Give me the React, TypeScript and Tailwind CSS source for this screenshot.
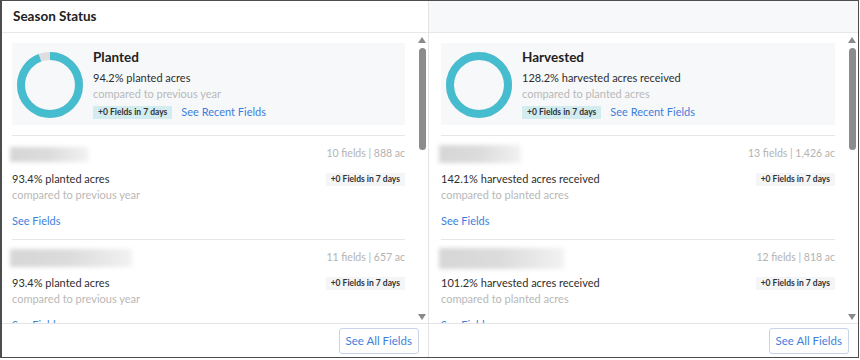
import React from "react";

type Row = {
  nameWidth: string;
  nameHeight: string;
  count: string;
  pct: string;
  compared: string;
};

type Panel = {
  title: string;
  headline: string;
  compared: string;
  percent: number;
  rows: Row[];
  headerText?: string;
};

const panels: Panel[] = [
  {
    headerText: "Season Status",
    title: "Planted",
    headline: "94.2% planted acres",
    compared: "compared to previous year",
    percent: 94.2,
    rows: [
      { nameWidth: "w-[78px]", nameHeight: "h-[15px]", count: "10 fields | 888 ac", pct: "93.4% planted acres", compared: "compared to previous year" },
      { nameWidth: "w-[122px]", nameHeight: "h-[18px]", count: "11 fields | 657 ac", pct: "93.4% planted acres", compared: "compared to previous year" },
    ],
  },
  {
    title: "Harvested",
    headline: "128.2% harvested acres received",
    compared: "compared to planted acres",
    percent: 128.2,
    rows: [
      { nameWidth: "w-[82px]", nameHeight: "h-[18px]", count: "13 fields | 1,426 ac", pct: "142.1% harvested acres received", compared: "compared to planted acres" },
      { nameWidth: "w-[125px]", nameHeight: "h-[21px]", count: "12 fields | 818 ac", pct: "101.2% harvested acres received", compared: "compared to planted acres" },
    ],
  },
];

function Donut({ percent }: { percent: number }) {
  const r = 29;
  const c = 2 * Math.PI * r;
  const filled = Math.min(percent, 100) / 100;
  return (
    <svg width="66" height="66" viewBox="0 0 66 66" className="shrink-0">
      <circle cx="33" cy="33" r={r} fill="none" stroke="#dedede" strokeWidth="8" />
      <circle
        cx="33"
        cy="33"
        r={r}
        fill="none"
        stroke="#46bccf"
        strokeWidth="8"
        strokeDasharray={`${filled * c} ${c}`}
        transform="rotate(-90 33 33)"
      />
    </svg>
  );
}

function Scrollbar() {
  return (
    <div className="w-[12px] flex flex-col items-center pt-[4px] pb-[3px]">
      <div className="w-0 h-0 border-l-[4px] border-r-[4px] border-b-[6px] border-l-transparent border-r-transparent border-b-[#8a8a8a]" />
      <div className="mt-[5px] w-[7px] h-[102px] rounded-full bg-[#8c8c8c]" />
      <div className="flex-1" />
      <div className="w-0 h-0 border-l-[4px] border-r-[4px] border-t-[6px] border-l-transparent border-r-transparent border-t-[#8a8a8a]" />
    </div>
  );
}

function FieldRow({ row }: { row: Row }) {
  return (
    <div className="border-t border-[#e6e6e6] pt-[10px] pb-[10px]">
      <div className="flex items-center justify-between h-[16px]">
        <div className={`-ml-[2px] ${row.nameWidth} ${row.nameHeight} blur-[2px] bg-linear-to-r from-[#d6d6d6] via-[#dcdcdc] to-[#f2f2f2]`} />
        <span className="text-[10.5px] text-[#b3b3b3]">{row.count}</span>
      </div>
      <div className="mt-[9px] flex items-center justify-between h-[16px]">
        <span className="text-[11px] text-[#2e2e2e]">{row.pct}</span>
        <span className="bg-[#f4f5f6] px-[5px] h-[13px] flex items-center text-[8.5px] font-bold text-[#333]">+0 Fields in 7 days</span>
      </div>
      <div className="h-[16px] flex items-center text-[11px] text-[#b8b8b8]">{row.compared}</div>
      <div className="mt-[10px] h-[16px] flex items-center text-[11px] text-[#3d7fdc]">See Fields</div>
    </div>
  );
}

function StatusPanel({ panel, first }: { panel: Panel; first: boolean }) {
  return (
    <div className={`flex flex-col h-full ${first ? "w-[427px] border-r border-[#e4e4e4]" : "flex-1"}`}>
      <div className={`h-[32px] shrink-0 border-b border-[#e8e8e8] flex items-center pl-[11px] ${first ? "bg-white" : "bg-[#f7f8fa]"}`}>
        {panel.headerText && <span className="text-[13.5px] font-bold text-[#222]">{panel.headerText}</span>}
      </div>
      <div className="flex h-[290px] shrink-0">
        <div className={`flex-1 overflow-hidden pt-[10px] pr-[11px] ${first ? "pl-[10px]" : "pl-[12px]"}`}>
          <div className="h-[82px] bg-[#f7f8fa] flex items-center pl-[5px] pt-[1px]">
            <Donut percent={panel.percent} />
            <div className="ml-[10px] flex flex-col">
              <div className="h-[16px] flex items-center text-[13.5px] font-bold text-[#222]">{panel.title}</div>
              <div className="mt-[5px] h-[16px] flex items-center text-[11px] text-[#2e2e2e]">{panel.headline}</div>
              <div className="h-[16px] flex items-center text-[11px] text-[#b8b8b8]">{panel.compared}</div>
              <div className="mt-[2px] flex items-center">
                <span className="bg-[#d2ecf0] px-[5px] h-[13px] flex items-center text-[8.5px] font-bold text-[#333]">+0 Fields in 7 days</span>
                <span className="ml-[9px] text-[11px] text-[#3d7fdc]">See Recent Fields</span>
              </div>
            </div>
          </div>
          <div className="mt-[10px]">
            {panel.rows.map((row, i) => (
              <FieldRow key={i} row={row} />
            ))}
          </div>
        </div>
        <Scrollbar />
      </div>
      <div className="flex-1 border-t border-[#e4e4e4] flex items-center justify-end pr-[9px]">
        <button className="h-[26px] px-[6px] border border-[#c6d3ea] rounded-[3px] bg-white text-[11.5px] text-[#3d7fdc]">
          See All Fields
        </button>
      </div>
    </div>
  );
}

export default function App() {
  return (
    <div className="w-[860px] h-[360px] bg-white font-['Lato','Open_Sans',sans-serif]">
      <div className="w-[859px] h-[358px] border border-l-2 border-[#4d4d4d] flex">
        {panels.map((p, i) => (
          <StatusPanel key={i} panel={p} first={i === 0} />
        ))}
      </div>
    </div>
  );
}
